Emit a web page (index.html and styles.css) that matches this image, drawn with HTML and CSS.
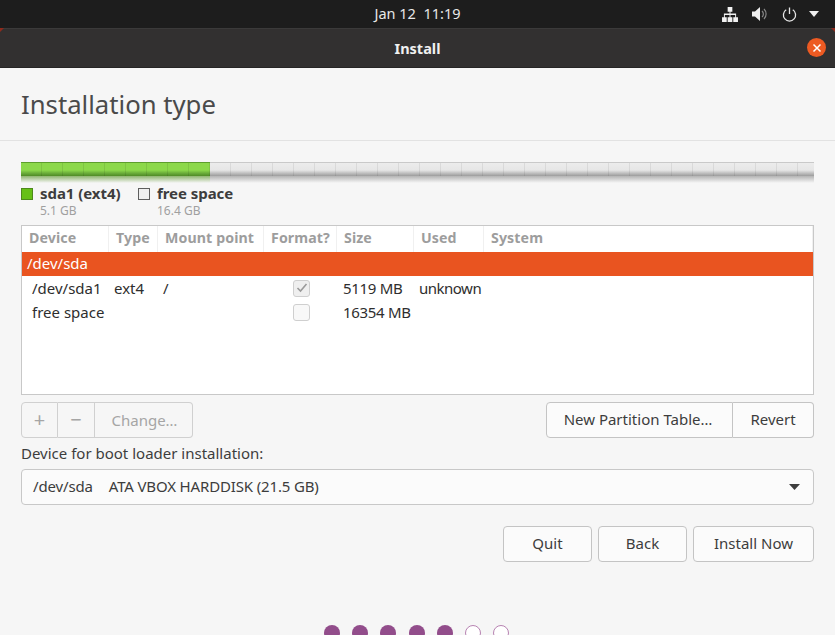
FILE: index.html
```html
<!DOCTYPE html>
<html lang="en">
<head>
<meta charset="utf-8">
<title>Install</title>
<link rel="stylesheet" href="styles.css">
</head>
<body>
<header class="topbar">
  <div class="clock">Jan 12&nbsp;&nbsp;11:19</div>
  <div class="tray">
    <svg class="ico-net" width="16" height="15" viewBox="0 0 17 16"><path d="M6 0h5v5H9v2h6v4h2v5h-5v-5h2V8.500H9V11h2v5H6v-5h2V8.500H3V11h2v5H0v-5h2V7h6V5H6z" fill="#f2f2f2"/></svg>
    <svg class="ico-vol" width="16" height="14" viewBox="0 0 16 14"><path d="M0 4.500h3L8 0v14L3 9.500H0z" fill="#eee"/><path d="M10 4a4 4 0 0 1 0 6M12 2a7 7 0 0 1 0 10" fill="none" stroke="#888" stroke-width="1.200"/></svg>
    <svg class="ico-pow" width="15" height="15" viewBox="0 0 16 16"><path d="M4.500 3a6.500 6.500 0 1 0 7 0M8 0.500v7" fill="none" stroke="#e6e6e6" stroke-width="1.400"/></svg>
    <svg class="ico-caret" width="10" height="6" viewBox="0 0 10 6"><path d="M0 0h10L5 6z" fill="#eee"/></svg>
  </div>
</header>
<div class="titlebar">
  <span class="title">Install</span>
  <span class="close"><svg width="10" height="10" viewBox="0 0 10 10"><path d="M1.500 1.500l7 7M8.500 1.500l-7 7" stroke="#fff" stroke-width="1.500" fill="none"/></svg></span>
</div>
<main class="content">
  <h1 class="heading">Installation type</h1>
  <div class="body">
    <div class="bar"><div class="bar-used"></div></div>
    <div class="legend">
      <div class="leg-item leg-a">
        <span class="swatch swatch-green"></span>
        <div class="leg-text"><div class="leg-name">sda1 (ext4)</div><div class="leg-size">5.1 GB</div></div>
      </div>
      <div class="leg-item">
        <span class="swatch swatch-free"></span>
        <div class="leg-text"><div class="leg-name">free space</div><div class="leg-size">16.4 GB</div></div>
      </div>
    </div>
    <div class="table">
      <div class="row head">
        <span>Device</span><span>Type</span><span>Mount point</span><span>Format?</span><span>Size</span><span>Used</span><span>System</span>
      </div>
      <div class="selected">/dev/sda</div>
      <div class="row r1">
        <span class="c-dev">/dev/sda1</span><span class="c-type">ext4</span><span class="c-mount">/</span>
        <span class="c-fmt"><span class="check on"><svg width="12" height="10" viewBox="0 0 12 10"><path d="M1.500 5l3 3 6-7" fill="none" stroke="#9a9a9a" stroke-width="1.600"/></svg></span></span>
        <span class="c-size">5119 MB</span><span class="c-used">unknown</span><span></span>
      </div>
      <div class="row r2">
        <span class="c-free">free space</span><span></span><span></span>
        <span class="c-fmt"><span class="check"></span></span>
        <span class="c-size">16354 MB</span><span></span><span></span>
      </div>
    </div>
    <div class="toolbar">
      <div class="btn-group">
        <button class="btn seg seg-icon" disabled>+</button><button class="btn seg seg-icon" disabled>−</button><button class="btn seg seg-change" disabled>Change…</button>
      </div>
      <div class="btn-group right">
        <button class="btn npt">New Partition Table…</button><button class="btn revert">Revert</button>
      </div>
    </div>
    <label class="boot-label">Device for boot loader installation:</label>
    <div class="combo">
      <span class="combo-dev">/dev/sda</span><span class="combo-name">ATA VBOX HARDDISK (21.5 GB)</span>
      <svg class="combo-caret" width="11" height="6" viewBox="0 0 11 6"><path d="M0 0h11L5.500 6z" fill="#3d3d3d"/></svg>
    </div>
    <div class="actions">
      <button class="btn quit">Quit</button>
      <button class="btn back">Back</button>
      <button class="btn install">Install Now</button>
    </div>
  </div>
  <div class="dots">
    <span class="dot"></span><span class="dot"></span><span class="dot"></span><span class="dot"></span><span class="dot"></span><span class="dot open"></span><span class="dot open"></span>
  </div>
</main>
</body>
</html>
```
FILE: styles.css
```css
* { box-sizing: border-box; }
html, body { margin: 0; height: 100%; overflow: hidden; }
body {
  width: 835px;
  height: 635px;
  background: #f6f6f6;
  font-family: "Noto Sans", "Open Sans", sans-serif;
  font-size: 15px;
  color: #3d3d3d;
  display: flex;
  flex-direction: column;
}
.topbar {
  height: 28px;
  background: #1d1d1d;
  color: #e8e8e8;
  position: relative;
  display: flex;
  align-items: center;
  justify-content: flex-end;
  flex: none;
}
.clock {
  position: absolute;
  left: 0;
  right: 0;
  text-align: center;
  font-size: 14.500px;
  line-height: 28px;
  top: -1px;
}
.tray {
  display: flex;
  align-items: center;
  padding-right: 16px;
}
.ico-vol { margin-left: 14px; }
.ico-pow { margin-left: 14px; }
.ico-caret { margin-left: 12px; }
.titlebar {
  height: 40px;
  flex: none;
  background: #323030;
  border-top: 1px solid #3b3a3a;
  border-bottom: 1px solid #262525;
  position: relative;
  display: flex;
  align-items: center;
  justify-content: center;
}
.titlebar::before,
.titlebar::after {
  content: "";
  position: absolute;
  top: -1px;
  width: 0;
  height: 0;
  border-top: 4px solid #8f2a1c;
}
.titlebar::before { left: 0; border-right: 4px solid transparent; }
.titlebar::after { right: 0; border-left: 4px solid transparent; }
.title {
  color: #f0f0f0;
  font-size: 14.500px;
  font-weight: 700;
  margin-top: -1px;
}
.close {
  position: absolute;
  right: 9px;
  top: 9px;
  width: 19px;
  height: 19px;
  border-radius: 50%;
  background: #ed5a22;
  display: flex;
  align-items: center;
  justify-content: center;
}
.content {
  flex: 1;
  min-height: 0;
  position: relative;
  overflow: hidden;
}
.heading {
  margin: 0;
  height: 73px;
  padding: 19px 0 0 21px;
  border-bottom: 1px solid #e2e2e2;
  font-size: 25.700px;
  line-height: 36px;
  font-weight: 400;
  color: #4a4a4a;
}
.body {
  padding: 21px 21px 0;
}
.bar {
  height: 14px;
  background:
    repeating-linear-gradient(90deg, transparent 0 20px, rgba(0,0,0,.07) 20px 21px),
    linear-gradient(#ececec 0, #e6e6e6 55%, #b4b4b4 85%, #9c9c9c 100%);
  border-top: 1px solid #c9c9c9;
  position: relative;
}
.bar::after {
  content: "";
  position: absolute;
  left: 0;
  right: 0;
  top: 13px;
  height: 7px;
  background: linear-gradient(#b4b4b4, rgba(246,246,246,0));
}
.bar-used {
  position: absolute;
  left: 0;
  top: -1px;
  bottom: 0;
  width: 189px;
  background:
    repeating-linear-gradient(90deg, transparent 0 20px, rgba(0,0,0,.09) 20px 21px),
    linear-gradient(#8cd84a 0, #8cd84a 55%, #68aa38 80%, #4f8a26 100%);
  border-top: 1px solid #5d9e2c;
  z-index: 1;
}
.bar-used::after {
  content: "";
  position: absolute;
  left: 0;
  right: 0;
  top: 13px;
  height: 7px;
  background: linear-gradient(#8fb56f, #f6f6f6);
}
.legend {
  display: flex;
  margin-top: 10px;
  height: 39px;
}
.leg-item { display: flex; }
.leg-a { width: 117px; }
.swatch {
  width: 12px;
  height: 12px;
  margin-top: 2px;
  margin-right: 7px;
  flex: none;
  border: 1px solid #4a4a4a;
}
.swatch-green { background: #66c016; border-color: #4d8a1b; }
.swatch-free { background: #efefef; border-color: #5e5e5e; margin-right: 7px; }
.leg-name {
  font-size: 15px;
  line-height: 16px;
  margin-top: -1px;
  font-weight: 700;
  color: #3d3d3d;
  letter-spacing: -0.050px;
}
.leg-size {
  font-size: 12px;
  line-height: 16px;
  margin-top: 2px;
  color: #a0a0a0;
}
.table {
  height: 170px;
  border: 1px solid #c8c8c8;
  background: #fff;
  margin-top: 0;
  font-size: 15px;
  color: #2e2e2e;
}
.row {
  display: grid;
  grid-template-columns: 87px 49px 106px 73px 77px 70px 1fr;
  align-items: center;
}
.head {
  height: 26px;
  font-weight: 700;
  color: #9d9d9d;
  font-size: 14.200px;
  letter-spacing: 0.100px;
}
.head span {
  height: 26px;
  line-height: 24px;
  padding-left: 7px;
  border-right: 1px solid #f0f0f0;
  white-space: nowrap;
}
.selected {
  height: 24px;
  line-height: 23px;
  background: #e95420;
  color: #fff;
  padding-left: 5px;
}
.r1 { height: 24px; }
.r2 { height: 24px; }
.row span { white-space: nowrap; }
.c-dev { padding-left: 10px; }
.c-free { padding-left: 10px; }
.c-type { padding-left: 5px; }
.c-mount { padding-left: 5px; }
.c-fmt { display: flex; padding-left: 29px; }
.c-size { padding-left: 6px; letter-spacing: -0.300px; }
.c-used { padding-left: 5px; letter-spacing: -0.500px; }
.check {
  width: 17px;
  height: 17px;
  border: 1px solid #cfcfcf;
  border-radius: 3px;
  background: #f8f8f8;
  display: flex;
  align-items: center;
  justify-content: center;
}
.check.on { background: #efefef; }
.btn {
  font-family: inherit;
  font-size: 15px;
  color: #3d3d3d;
  background: #fbfbfb;
  border: 1px solid #c4c4c4;
  border-radius: 4px;
  height: 36px;
  padding: 0 0 2px;
  display: block;
}
.toolbar {
  display: flex;
  justify-content: space-between;
  margin-top: 7px;
  height: 36px;
}
.btn-group { display: flex; }
.seg { border-radius: 0; color: #a5a5a5; background: #f6f6f6; border-color: #d0d0d0; padding: 0; }
.seg + .seg { border-left: 0; }
.seg:first-child { border-radius: 4px 0 0 4px; }
.seg:last-child { border-radius: 0 4px 4px 0; }
.seg-icon { width: 37px; font-size: 20px; line-height: 1; font-weight: 400; }
.seg-change { width: 98px; padding-left: 2px; }
.npt { width: 187px; border-radius: 4px 0 0 4px; padding-right: 3px; }
.revert { width: 81px; border-left: 0; border-radius: 0 4px 4px 0; }
.boot-label {
  display: block;
  margin-top: 6px;
  line-height: 19px;
  font-size: 15px;
  color: #3d3d3d;
}
.combo {
  margin-top: 6px;
  height: 36px;
  border: 1px solid #c8c8c8;
  border-radius: 4px;
  background: #fbfbfb;
  display: flex;
  align-items: center;
  padding: 0 13px 2px 11px;
  letter-spacing: -0.150px;
}
.combo-dev { margin-right: 16px; }
.combo-name { flex: 1; }
.combo-caret { margin-top: 2px; }
.actions {
  display: flex;
  justify-content: flex-end;
  gap: 6px;
  margin-top: 21px;
}
.quit { width: 89px; }
.back { width: 89px; }
.install { width: 121px; }
.dots {
  position: absolute;
  left: 324px;
  top: 557px;
  display: flex;
  gap: 12.200px;
}
.dot {
  width: 16px;
  height: 16px;
  border-radius: 50%;
  background: #924d8b;
}
.dot.open {
  background: #fff;
  border: 1.500px solid #b783b2;
}
```
